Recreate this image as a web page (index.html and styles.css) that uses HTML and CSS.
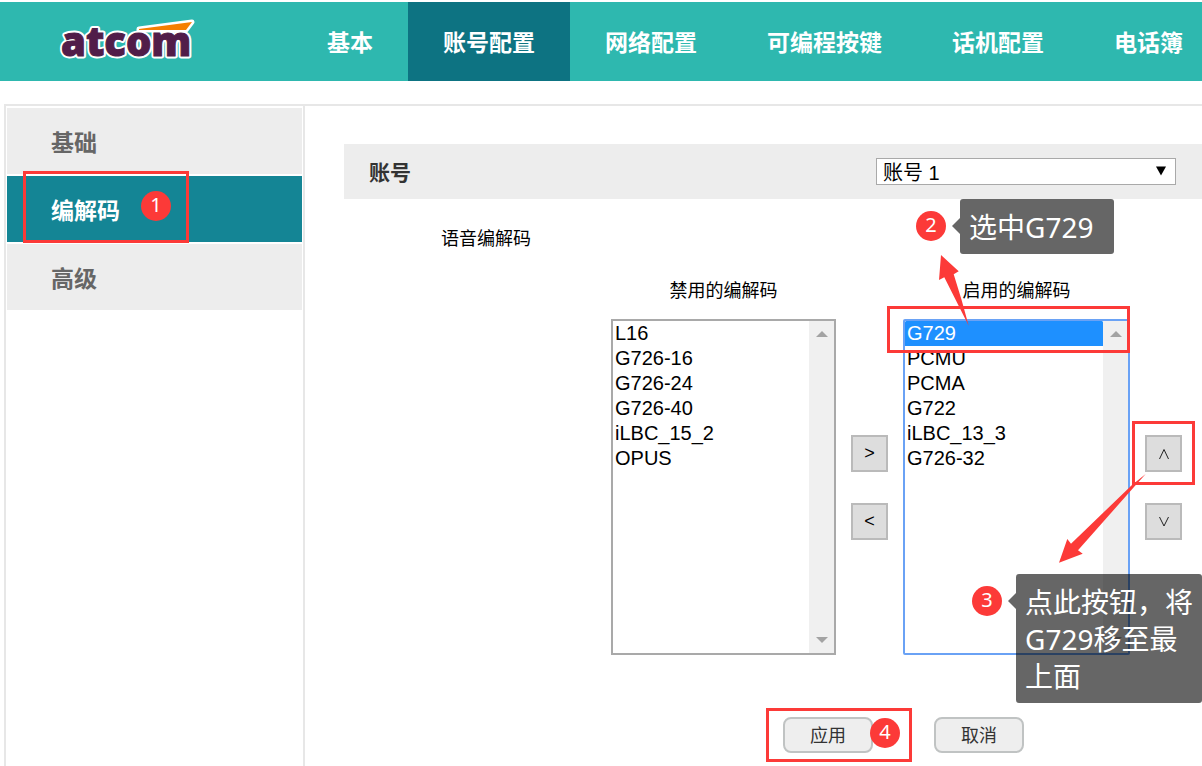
FILE: index.html
```
<!DOCTYPE html>
<html lang="zh-CN">
<head>
<meta charset="utf-8">
<title>账号配置</title>
<link rel="stylesheet" href="styles.css">
</head>
<body>
<header class="topbar">
  <a class="logo" href="#" aria-label="atcom">
    <svg width="140" height="46" viewBox="56 17 140 46" aria-hidden="true">
      <g class="logo-halo">
        <text x="61" y="56">atcom</text>
        <path d="M139 29 L192 22 L186 30 L139 30 Z"/>
      </g>
      <text class="logo-word" x="61" y="56">atcom</text>
      <path class="logo-swoosh" d="M139 29 L192 22 L186 30 L139 30 Z"/>
    </svg>
  </a>
  <nav class="topnav">
    <a href="#">基本</a>
    <a href="#" class="active">账号配置</a>
    <a href="#">网络配置</a>
    <a href="#">可编程按键</a>
    <a href="#">话机配置</a>
    <a href="#">电话簿</a>
  </nav>
</header>

<div class="frame">
  <nav class="sidebar">
    <a href="#">基础</a>
    <a href="#" class="active">编解码
      <span class="mark mark-codec"></span>
      <span class="step step-1">1</span>
    </a>
    <a href="#">高级</a>
  </nav>

  <main class="content">
    <div class="account-bar">
      <label for="account">账号</label>
      <div class="account-select">
        <select id="account"><option>账号 1</option></select>
        <svg width="10" height="10" viewBox="0 0 10 10" aria-hidden="true"><path d="M0 0.5 H10 L5 9.5 Z"/></svg>
      </div>
    </div>

    <h2 class="section-title">语音编解码</h2>

    <div class="transfer">
      <label class="head-off" for="disabled">禁用的编解码</label>
      <label class="head-on" for="enabled">启用的编解码</label>
      <div class="listbox">
        <select id="disabled" size="12">
          <option>L16</option>
          <option>G726-16</option>
          <option>G726-24</option>
          <option>G726-40</option>
          <option>iLBC_15_2</option>
          <option>OPUS</option>
        </select>
        <div class="track" aria-hidden="true">
          <svg width="12" height="6" viewBox="0 0 12 6"><path d="M0 6 L6 0 L12 6 Z"/></svg>
          <svg width="12" height="6" viewBox="0 0 12 6"><path d="M0 0 L6 6 L12 0 Z"/></svg>
        </div>
      </div>
      <div class="movers">
        <button type="button">&gt;</button>
        <button type="button">&lt;</button>
      </div>
      <div class="listbox focused">
        <select id="enabled" size="12">
          <option selected>G729</option>
          <option>PCMU</option>
          <option>PCMA</option>
          <option>G722</option>
          <option>iLBC_13_3</option>
          <option>G726-32</option>
        </select>
        <div class="track" aria-hidden="true">
          <svg width="12" height="6" viewBox="0 0 12 6"><path d="M0 6 L6 0 L12 6 Z"/></svg>
          <svg width="12" height="6" viewBox="0 0 12 6"><path d="M0 0 L6 6 L12 0 Z"/></svg>
        </div>
      </div>
      <div class="movers">
        <button type="button" aria-label="上移"><svg width="12" height="12" viewBox="0 0 12 12"><path d="M1.5 12 L6 2.5 L10.5 12"/></svg></button>
        <button type="button" aria-label="下移"><svg width="12" height="12" viewBox="0 0 12 12"><path d="M1.5 2 L6 11 L10.5 2"/></svg></button>
      </div>
    </div>

    <div class="actions">
      <button type="button">应用</button>
      <button type="button">取消</button>
    </div>

    <div class="notes">
      <span class="mark mark-selected"></span>
      <span class="mark mark-up"></span>
      <span class="mark mark-apply"></span>
      <span class="step step-2">2</span>
      <div class="callout callout-select">选中G729</div>
      <span class="step step-3">3</span>
      <div class="callout callout-move">点此按钮，将G729移至最上面</div>
      <span class="step step-4">4</span>
      <svg class="arrows" width="897" height="660" viewBox="305 106 897 660" aria-hidden="true">
        <path d="M941 255 L958.7 271.3 L953.7 274.3 Q962 300 968.7 325.7 L944.3 277.3 L939 280 Z"/>
        <path d="M1059 562.7 L1067.3 539 L1071 543.7 L1132 485 L1145.7 474 L1134 487 L1078 550.3 L1082.7 553.7 Z"/>
      </svg>
    </div>
  </main>
</div>
</body>
</html>
```
FILE: styles.css
```
* { box-sizing: border-box; }

body {
  margin: 0;
  padding-top: 2px;
  min-height: 100vh;
  display: flex;
  flex-direction: column;
  overflow: hidden;
  background: #fff;
  color: #000;
  font: 18px/24px "Liberation Sans", "Noto Sans CJK SC", sans-serif;
}

a { color: inherit; text-decoration: none; }
button, select { font: inherit; color: inherit; margin: 0; }

.topbar {
  display: flex;
  height: 79px;
  flex: none;
  background: #2eb8af;
  overflow: hidden;
}
.logo { width: 292px; flex: none; padding: 15px 0 0 56px; }
.logo svg { display: block; overflow: visible; }
.logo text { font: 800 40px "Open Sans", sans-serif; }
.logo-halo { fill: #fff; stroke: #fff; stroke-width: 5px; stroke-linejoin: round; }
.logo-word { fill: #511d49; stroke: #511d49; stroke-width: 1px; }
.logo-swoosh { fill: #f57f00; }

.topnav { display: flex; color: #fff; font-size: 23px; font-weight: bold; }
.topnav a {
  display: flex;
  align-items: center;
  padding: 2px 35px 0;
  white-space: nowrap;
}
.topnav .active { background: #0d7382; }

.frame {
  flex: 1;
  display: flex;
  margin: 23px 0 0 4px;
  border: solid #e7e7e7;
  border-width: 2px 0 0 2px;
}
.sidebar {
  width: 299px;
  flex: none;
  display: flex;
  flex-direction: column;
  gap: 2px;
  padding: 2px 1px;
  border-right: 2px solid #e7e7e7;
  color: #666;
  font-size: 23px;
  font-weight: bold;
}
.sidebar a {
  position: relative;
  height: 66px;
  display: flex;
  align-items: center;
  padding: 3px 0 0 44px;
  background: #ededed;
}
.sidebar .active { background: #148595; color: #fff; }

.content { position: relative; flex: 1; min-width: 0; padding-top: 38px; }
.account-bar {
  display: flex;
  align-items: center;
  justify-content: space-between;
  height: 55px;
  margin-left: 39px;
  padding: 0 26px 0 25px;
  background: #ededed;
  color: #333;
  font-size: 21px;
  font-weight: bold;
}
.account-bar label { padding-top: 2px; }
.account-select { position: relative; width: 300px; color: #000; font-size: 20px; font-weight: normal; }
.account-select select {
  display: block;
  width: 100%;
  height: 27px;
  padding: 2px 6px 0;
  appearance: none;
  background: #fff;
  border: 1px solid #a9a9a9;
  border-radius: 0;
}
.account-select svg { position: absolute; right: 10px; top: 8px; }

.section-title { margin: 28px 0 0 136px; font-size: 18px; font-weight: normal; }

.transfer {
  display: grid;
  grid-template-columns: 225px 37px 227px 37px;
  column-gap: 15px;
  row-gap: 16px;
  margin: 28px 0 0 306px;
}
.transfer label { text-align: center; }
.head-off { grid-column: 1; }
.head-on { grid-column: 3; }
.listbox {
  grid-row: 2;
  display: flex;
  height: 336px;
  border: 2px solid #a9a9a9;
  background: #fff;
}
.focused { border-color: #6aa2f5; border-radius: 2px; }
.listbox select {
  flex: 1;
  min-width: 0;
  padding: 0;
  border: 0;
  outline: 0;
  background: none;
  overflow: hidden;
  font-size: 20px;
}
.listbox option { height: 25px; min-height: 25px; padding: 1px 2px 0; line-height: 24px; color: #000; }
.listbox option:checked { background: #1e90ff linear-gradient(#1e90ff, #1e90ff); color: #fff; }
.track {
  width: 25px;
  display: flex;
  flex-direction: column;
  justify-content: space-between;
  align-items: center;
  padding: 10px 0;
  background: #f0f0f0;
}
.track svg { fill: #a3a3a3; }

.movers { grid-row: 2; display: flex; flex-direction: column; justify-content: center; gap: 31px; }
.movers button {
  display: flex;
  align-items: center;
  justify-content: center;
  height: 37px;
  padding: 0;
  border: 2px solid #bababa;
  background: #ddd;
}
.movers svg { fill: none; stroke: #222; }

.actions { display: flex; gap: 61px; margin: 62px 0 0 478px; }
.actions button {
  width: 90px;
  height: 36px;
  padding: 2px 0 0;
  border: 2px solid #c0c3c3;
  border-radius: 8px;
  background: #eee;
  color: #333;
}

.notes { position: absolute; inset: 0; pointer-events: none; overflow: hidden; }
.arrows { position: absolute; left: 0; top: 0; fill: #fc3a38; }
.mark { position: absolute; border: 3px solid #fc3a38; }
.mark-codec { left: 16px; top: -5px; width: 166px; height: 72px; }
.mark-selected { left: 582px; top: 200px; width: 243px; height: 47px; }
.mark-up { left: 827px; top: 315px; width: 63px; height: 64px; }
.mark-apply { left: 461px; top: 602px; width: 146px; height: 54px; }

.step {
  position: absolute;
  width: 30px;
  height: 30px;
  border-radius: 50%;
  background: #fc3a38;
  color: #fff;
  font: 20px/28px "Noto Sans", sans-serif;
  text-align: center;
}
.step-1 { left: 134px; top: 15px; }
.step-2 { left: 611px; top: 105px; }
.step-3 { left: 667px; top: 480px; }
.step-4 { left: 565px; top: 612px; }

.callout {
  position: absolute;
  padding: 10px 9px 8px;
  border-radius: 3px;
  background: rgba(0, 0, 0, .6);
  color: #fff;
  font: 28px/37px "Noto Sans", "Noto Sans CJK SC", sans-serif;
}
.callout::before {
  content: "";
  position: absolute;
  left: -8px;
  top: 19px;
  border: solid transparent;
  border-width: 8px 8px 8px 0;
  border-right-color: rgba(0, 0, 0, .6);
}
.callout-select { left: 655px; top: 93px; width: 154px; }
.callout-move { left: 711px; top: 468px; width: 186px; }
```
